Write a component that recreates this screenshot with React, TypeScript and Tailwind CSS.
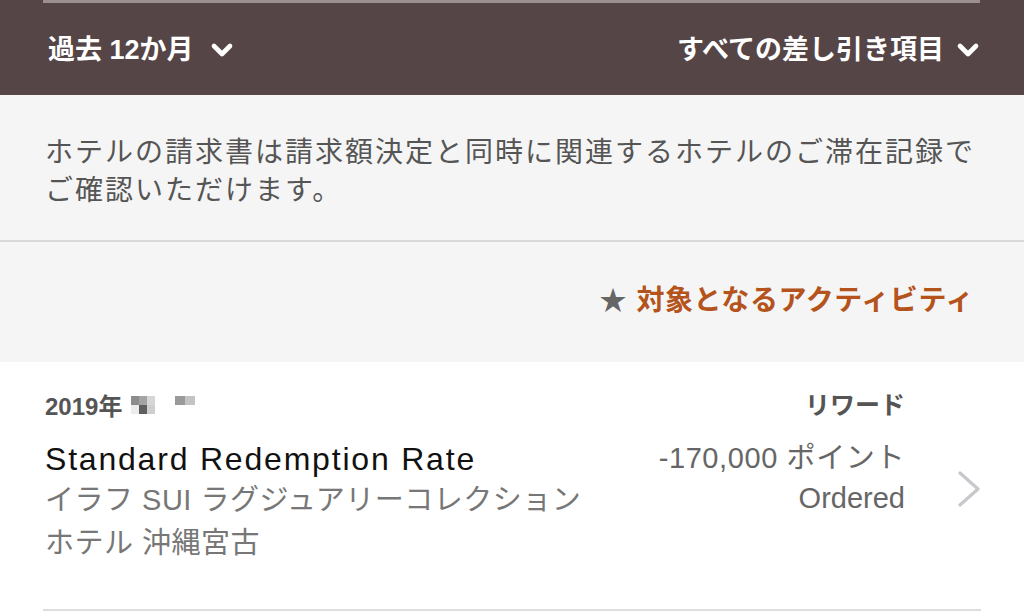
import { ChevronDown } from "lucide-react";

function Mosaic() {
  // pixelated redaction next to the date
  return (
    <span className="ml-[9px] inline-flex items-start gap-[20px] -mt-[4px]">
      <span className="grid grid-cols-3 grid-rows-2">
        <span className="h-[9px] w-[8px] bg-[#8c8c8c]" />
        <span className="h-[9px] w-[8px] bg-[#a3a3a3]" />
        <span className="h-[9px] w-[8px] bg-[#d6d6d6]" />
        <span className="h-[9px] w-[8px] bg-[#ececec]" />
        <span className="h-[9px] w-[8px] bg-[#5f5f5f]" />
        <span className="h-[9px] w-[8px] bg-[#cfcfcf]" />
      </span>
      <span className="grid grid-cols-2">
        <span className="h-[9px] w-[10px] bg-[#9a9a9a]" />
        <span className="h-[9px] w-[10px] bg-[#c4c4c4]" />
      </span>
    </span>
  );
}

export default function App() {
  return (
    <main className="w-[1024px] h-[612px] overflow-hidden bg-white font-['Liberation_Sans','Noto_Sans_CJK_JP',sans-serif]">
      {/* Filter bar */}
      <header className="h-[95px] bg-[#564547] flex flex-col">
        <div className="ml-[43px] mr-[44px] h-[3px] bg-[#9a9092]" />
        <div className="flex-1 flex items-center justify-between pl-[48px] pr-[40px] pt-[2px] text-white text-[27px] font-semibold">
          <div className="flex items-center gap-[12px]">
            <span>過去 12か月</span>
            <ChevronDown size={32} strokeWidth={3.5} />
          </div>
          <div className="flex items-center gap-[8px]">
            <span>すべての差し引き項目</span>
            <ChevronDown size={32} strokeWidth={3.5} />
          </div>
        </div>
      </header>

      {/* Notice */}
      <section className="bg-[#f5f5f5] pl-[45px] pr-[40px] pt-[39px] pb-[30px] border-b-2 border-[#d9d9d9]">
        <p className="text-[28px] leading-[38px] tracking-[2px] text-[#555555]">
          ホテルの請求書は請求額決定と同時に関連するホテルのご滞在記録で
          <br />
          ご確認いただけます。
        </p>
      </section>

      {/* Legend */}
      <section className="h-[120px] bg-[#f5f5f5] flex items-center justify-end pr-[50px] pb-[2px]">
        <span className="text-[27px] text-[#666666] mr-[10px]">★</span>
        <span className="text-[28px] tracking-[0.6px] font-semibold text-[#b4531c]">対象となるアクティビティ</span>
      </section>

      {/* Activity row */}
      <section className="ml-[43px] mr-[43px] border-b-2 border-[#dedede] flex pb-[44px]">
        <div className="flex-1 pl-[2px] pt-[30px]">
          <div className="flex items-center h-[30px] text-[24px] font-semibold text-[#555555]">
            2019年
            <Mosaic />
          </div>
          <div className="mt-[17px] text-[32px] leading-[40px] tracking-[1.8px] text-[#111111]">
            Standard Redemption Rate
          </div>
          <div className="text-[29px] leading-[43px] tracking-[0.5px] text-[#777777]">
            イラフ SUI ラグジュアリーコレクション
            <br />
            ホテル 沖縄宮古
          </div>
        </div>
        <div className="pt-[28px] flex flex-col items-end">
          <div className="h-[30px] leading-[30px] text-[25px] font-semibold text-[#555555]">リワード</div>
          <div className="mt-[18px] text-[29px] leading-[40px] tracking-[0.6px] text-[#666666]">-170,000 ポイント</div>
          <div className="text-[29px] leading-[40px] text-[#666666]">Ordered</div>
        </div>
        <div className="ml-[52px] flex items-center pt-[50px]">
          <svg width="24" height="36" viewBox="0 0 24 36" fill="none">
            <polyline points="3,2 21,18 3,34" stroke="#c7c7cc" strokeWidth="3.2" strokeLinecap="round" strokeLinejoin="round" />
          </svg>
        </div>
      </section>
    </main>
  );
}
